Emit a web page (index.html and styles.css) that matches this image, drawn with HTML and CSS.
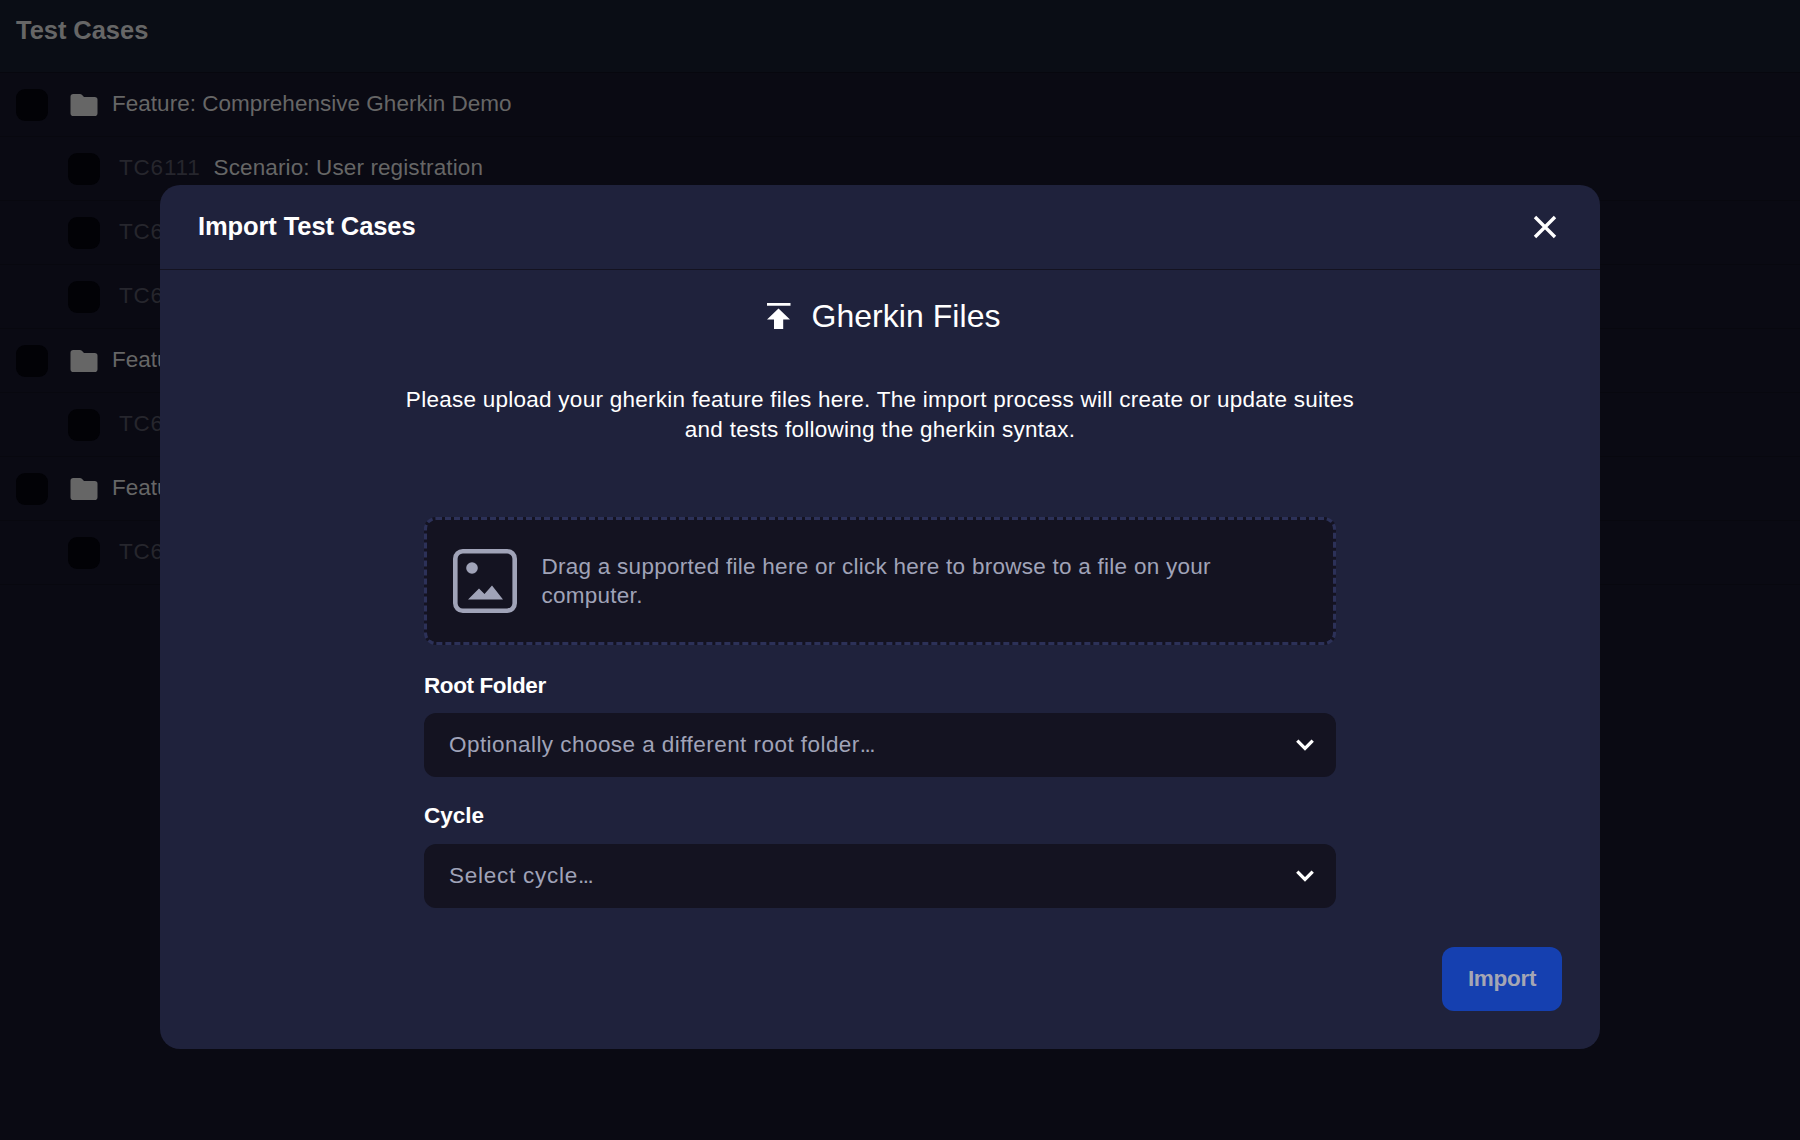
FILE: index.html
```html
<!DOCTYPE html>
<html lang="en">
<head>
<meta charset="utf-8">
<title>Import Test Cases</title>
<link rel="stylesheet" href="styles.css">
</head>
<body>
<svg width="0" height="0" class="defs">
  <symbol id="folder" viewBox="0 0 28 22"><path d="M3.300 0h6.500c1 0 1.700.4 2.300 1l1.900 1.900H24.700a2.800 2.800 0 0 1 2.800 2.800v13.500a2.800 2.800 0 0 1-2.800 2.800H3.300a2.800 2.800 0 0 1-2.800-2.800V2.800A2.800 2.800 0 0 1 3.300 0z" fill="currentColor"/></symbol>
  <symbol id="chevron" viewBox="0 0 18 12"><path d="M1.300 1.600 9 9.300l7.700-7.700" fill="none" stroke="currentColor" stroke-width="3.300"/></symbol>
</svg>
<main class="page">
  <header class="page-header"><h1>Test Cases</h1></header>
  <ul class="list">
    <li class="row"><span class="check"></span><svg class="folder"><use href="#folder"/></svg><span class="name">Feature: Comprehensive Gherkin Demo</span></li>
    <li class="row child"><span class="check"></span><span class="id">TC6111</span><span class="scenario">Scenario: User registration</span></li>
    <li class="row child"><span class="check"></span><span class="id">TC6</span></li>
    <li class="row child"><span class="check"></span><span class="id">TC6</span></li>
    <li class="row"><span class="check"></span><svg class="folder"><use href="#folder"/></svg><span class="name">Featu</span></li>
    <li class="row child"><span class="check"></span><span class="id">TC6</span></li>
    <li class="row"><span class="check"></span><svg class="folder"><use href="#folder"/></svg><span class="name">Featu</span></li>
    <li class="row child"><span class="check"></span><span class="id">TC6</span></li>
  </ul>
</main>
<section class="modal" role="dialog">
  <header class="modal-header">
    <h2>Import Test Cases</h2>
    <svg class="close" viewBox="0 0 24 24"><path d="M2 2l20 20M22 2 2 22" fill="none" stroke="currentColor" stroke-width="3.400"/></svg>
  </header>
  <div class="modal-body">
    <h3 class="source">
      <svg class="upload" viewBox="0 0 24 26"><path d="M0 0h23.500v2.800H0zM11.500 5.500 23 16.500h-6.800V26H7v-9.500H0z" fill="currentColor"/></svg>
      <span>Gherkin Files</span>
    </h3>
    <p class="intro">Please upload your gherkin feature files here. The import process will create or update suites<br>and tests following the gherkin syntax.</p>
    <div class="form">
      <div class="dropzone">
        <svg class="picture" viewBox="0 0 64 64"><rect x="2.300" y="2.300" width="59.400" height="59.400" rx="7.500" fill="none" stroke="currentColor" stroke-width="4.600"/><circle cx="19" cy="19" r="5.800" fill="currentColor"/><path d="M15 50.500 26 39.500l5.500 5.500L39 36.500l11 14z" fill="currentColor"/></svg>
        <p>Drag a supported file here or click here to browse to a file on your<br>computer.</p>
      </div>
      <label>Root Folder</label>
      <div class="select"><span>Optionally choose a different root folder<span class="dots">...</span></span><svg class="chevron"><use href="#chevron"/></svg></div>
      <label>Cycle</label>
      <div class="select"><span class="cycle">Select cycle<span class="dots">...</span></span><svg class="chevron"><use href="#chevron"/></svg></div>
    </div>
  </div>
  <footer class="modal-footer"><button type="button">Import</button></footer>
</section>
</body>
</html>
```
FILE: styles.css
```css
* { box-sizing: border-box; margin: 0; padding: 0; }
body {
  height: 1140px;
  overflow: hidden;
  background: #0a0a13;
  color: #fff;
  font: 22.5px/30px "Liberation Sans", Arial, sans-serif;
  letter-spacing: .26px;
  white-space: nowrap;
}
svg { display: block; flex: none; }
.defs { position: absolute; }
h1, h2, h3 { font-size: 25.5px; line-height: 30px; }

.page { color: #666; }
.page-header { height: 73px; padding: 15px 16px; background: #0a0d15; border-bottom: 1px solid #07070e; }
.page-header h1 { letter-spacing: -.05px; }
.list { list-style: none; }
.row { display: flex; align-items: center; height: 64px; padding-left: 16px; border-bottom: 1px solid #08080f; }
.row.child { padding-left: 68px; }
.check { width: 32px; height: 32px; border-radius: 9px; background: #020206; }
.folder { width: 28px; height: 22px; margin-left: 22px; }
.name, .id, .scenario { padding-bottom: 2px; }
.name { margin-left: 14px; letter-spacing: .02px; }
.id { margin-left: 19px; color: #26262d; letter-spacing: .8px; }
.scenario { margin-left: 13px; letter-spacing: .12px; }

.modal {
  position: absolute;
  left: 160px;
  top: 185px;
  width: 1440px;
  height: 864px;
  border-radius: 20px;
  background: #1f223c;
}
.modal-header { display: flex; align-items: center; justify-content: space-between; height: 85px; padding: 0 43px 0 38px; border-bottom: 1px solid #141321; }
.modal-header h2 { padding-bottom: 2px; letter-spacing: -.1px; }
.close { width: 24px; height: 24px; }
.modal-body { display: flex; flex-direction: column; align-items: center; padding-top: 26px; }
.source { display: flex; align-items: center; gap: 20px; height: 40px; margin-left: 8px; font-weight: 400; font-size: 32px; letter-spacing: .04px; }
.upload { width: 24px; height: 26px; }
.intro { margin-top: 49px; text-align: center; }
.form { display: flex; flex-direction: column; width: 912px; margin-top: 72px; }
.dropzone { display: flex; gap: 25px; height: 128px; padding: 29px 25px 29px 25.500px; border: 3px dashed #2c3158; border-radius: 12px; background: #141321; color: #a0a3b8; }
.picture { width: 64px; height: 64px; }
.dropzone p { line-height: 29px; margin-top: 3px; }
label { margin: 26px 0 12px; font-weight: 700; letter-spacing: -.4px; }
.select + label { margin: 24px 0 13px; letter-spacing: 0; }
.select { display: flex; align-items: center; justify-content: space-between; height: 64px; padding: 0 22px 0 25px; border-radius: 12px; background: #141321; color: #a0a3b8; letter-spacing: .45px; }
.cycle { letter-spacing: .75px; }
.dots { letter-spacing: -1.500px; }
.chevron { width: 18px; height: 12px; color: #fff; }
.modal-footer { display: flex; justify-content: flex-end; padding: 39px 38px 0; }
button { width: 120px; height: 64px; border: 0; border-radius: 12px; background: #1540b0; color: #a4a6b4; font: 700 22.5px/30px "Liberation Sans", Arial, sans-serif; letter-spacing: -.3px; }
```
